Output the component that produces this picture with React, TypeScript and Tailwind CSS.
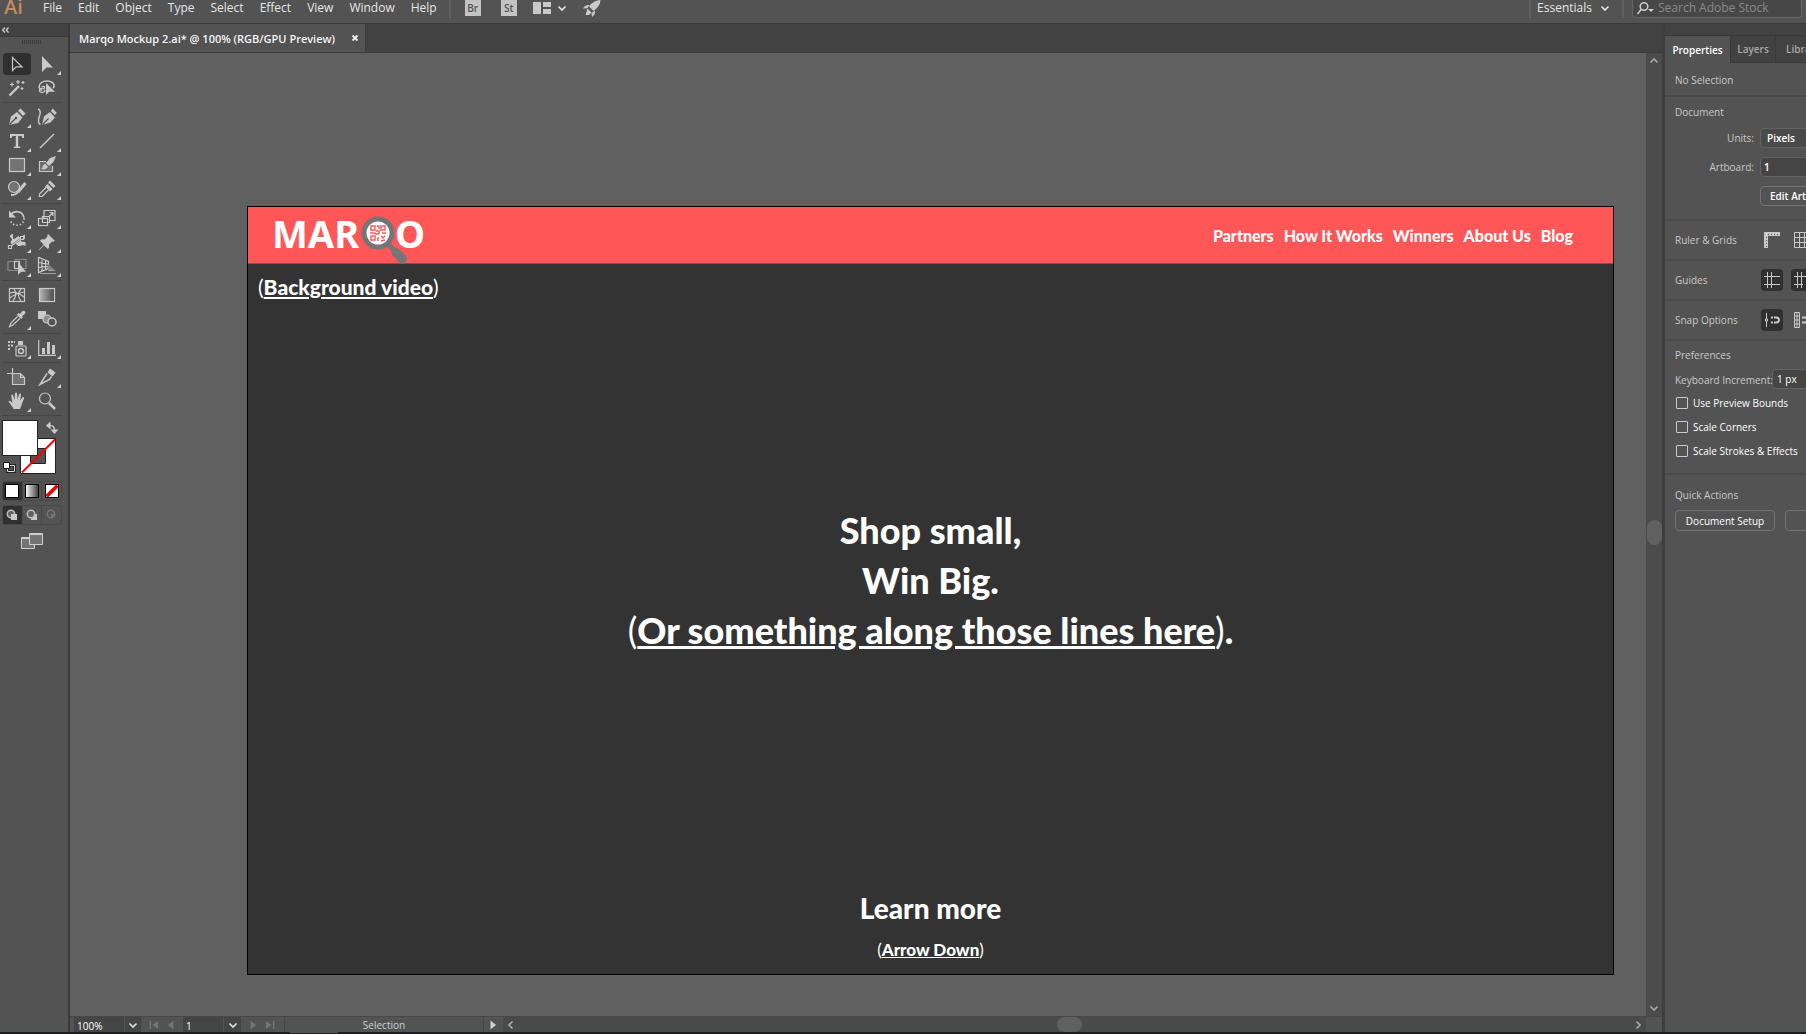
import type { ReactNode } from 'react';

const UI = "font-['Open_Sans','Noto_Sans',sans-serif]";
const DISPLAY = "font-['Lato','Liberation_Sans',sans-serif]";

function Icon({ children, size = 20 }: { children: ReactNode; size?: number }) {
  return (
    <svg width={size} height={size} viewBox="0 0 20 20" fill="none" stroke="#c9c9c9" strokeWidth="1.2" aria-hidden="true">
      {children}
    </svg>
  );
}

const F = '#c9c9c9';

type Tool = { name: string; art: ReactNode; more?: boolean; active?: boolean };

const toolGroups: Tool[][] = [
  [
    { name: 'Selection', active: true, art: <path d="M5.500 3.500v13l3.700-3.700h5.800z" /> },
    { name: 'Direct selection', more: true, art: <path d="M5 2v16l4.500-4.500H16z" fill={F} stroke="none" /> },
    {
      name: 'Magic wand',
      art: (
        <>
          <path d="M2.500 17.500L12 8" strokeWidth="2.400" />
          <path d="M5 4.500v4M3 6.500h4M11 2v4M9 4h4M16 3v3M14.500 4.500h3M15 9v3M13.500 10.500h3" />
        </>
      ),
    },
    {
      name: 'Lasso',
      art: (
        <>
          <path d="M5 12.500C1.500 11 1 7 4.500 4.500s10-2 12 1c1 1.800.5 3.500-.5 4.500" strokeWidth="1.500" />
          <path d="M8 12c0 2.500-5 3.500-5.500 1s4-4 5-1.500M4.500 8.500h3v2" />
          <path d="M9 5v12l3.200-3.200H18z" fill={F} stroke="none" />
        </>
      ),
    },
  ],
  [
    {
      name: 'Pen',
      more: true,
      art: (
        <>
          <path d="M2 18L4 9.500 10 5l5.500 5.500L11 16z" fill={F} stroke="none" />
          <path d="M11 3.800L13.500 1.500l5 5-2.300 2.500z" fill={F} stroke="none" />
          <path d="M2.500 17.500L8.500 11.500" stroke="#535353" />
          <circle cx="9" cy="11" r="1.200" fill="#535353" stroke="none" />
        </>
      ),
    },
    {
      name: 'Curvature',
      art: (
        <>
          <path d="M5 18L7 9.500l6-4.500 5 5.500-4.500 5z" fill={F} stroke="none" />
          <path d="M13.800 4l2-2.500 4 4.500L18 8z" fill={F} stroke="none" />
          <path d="M5.500 17.500l6-6" stroke="#535353" />
          <path d="M1 2c3 1 2.500 4 1.500 7s-2.500 7 1 8.500" strokeWidth="1.400" />
        </>
      ),
    },
    {
      name: 'Type',
      more: true,
      art: <path d="M3 3h14v4h-1.500L14.500 5H11.200v10.500h2v1.500H6.800v-1.500h2V5H5.500L4.500 7H3z" fill={F} stroke="none" />,
    },
    { name: 'Line segment', more: true, art: <path d="M3 17L17 3" strokeWidth="1.500" /> },
    { name: 'Rectangle', more: true, art: <rect x="2.500" y="3.500" width="15" height="13" fill="#737373" /> },
    {
      name: 'Paintbrush',
      more: true,
      art: (
        <>
          <path d="M9 6.500H2.500v10h13V11" fill="#6c6c6c" />
          <path d="M19 1l-6 2-4 5 3 3 4.500-4z" fill={F} stroke="none" />
          <path d="M8.200 8.800l2.700 2.700c-1 3-4 3.500-7 2.500 2-.5 1.500-4 4.300-5.200z" fill={F} stroke="none" />
        </>
      ),
    },
    {
      name: 'Shaper',
      more: true,
      art: (
        <>
          <circle cx="7" cy="8" r="5.500" fill="#737373" />
          <path d="M18.500 4L11 13" strokeWidth="3" />
          <path d="M11 13c-2 3-4 3-7 3" strokeWidth="1.800" />
        </>
      ),
    },
    {
      name: 'Slice',
      more: true,
      art: (
        <>
          <path d="M13 1.500l5.500 5.500-2 2L11 3.500z" fill={F} stroke="none" />
          <path d="M10.500 5l5 5-2.500 2.500-5-5z" fill={F} stroke="none" />
          <path d="M9 8.500L2.500 15v2.500H5l6.500-6.500" />
        </>
      ),
    },
  ],
  [
    {
      name: 'Rotate',
      more: true,
      art: (
        <>
          <path d="M4 7C6.500 2.500 15 2 17 9.500" strokeWidth="1.700" />
          <path d="M2 2.500v7h7z" fill={F} stroke="none" />
          <path d="M17 10c.5 8-10 10-13.500 3" strokeDasharray="1.500 2" strokeWidth="1.600" />
        </>
      ),
    },
    {
      name: 'Scale',
      more: true,
      art: (
        <>
          <path d="M7 10V2.500h11v10h-6" />
          <rect x="1.500" y="10.500" width="9" height="7" />
          <path d="M5.500 8.500h7v6h-7z" />
          <path d="M12 8.500l4-4M12.500 4.500H16V8" />
        </>
      ),
    },
    {
      name: 'Width',
      more: true,
      art: (
        <>
          <path d="M3 3.500l3-2v5c2 2 4-3 6-2s1 3 4-1l2-1v3c0 3-3 2-4 2.500 0 3 3 1 4.500 2.500v4c-3-3-6 1-8-1s-2-2-4-1-4-2-2-4S2 5.500 3 3.500z" fill={F} stroke="none" />
          <path d="M3 15l12-9" stroke="#535353" strokeWidth="2" />
          <path d="M3 15l12-9" />
          <path d="M1.500 13.500h3v3h-3zM13.500 4.500h3v3h-3z" fill="#535353" />
        </>
      ),
    },
    { name: 'Puppet warp', more: true, art: <path d="M11 2l7 7-2 .8-1-.3-3 3 .2 3-1.500 1.500-3.700-3.700L2.500 18 2 17.500l4.700-5L3 8.800l1.500-1.500 3 .2 3-3-.3-1z" fill={F} stroke="none" /> },
    {
      name: 'Shape builder',
      more: true,
      art: (
        <>
          <path d="M1 5.500h11v9H1z" stroke="#8b8b8b" />
          <path d="M7.500 3.500H19v9h-6" stroke="#8b8b8b" />
          <rect x="7.500" y="5.500" width="5" height="7" />
          <path d="M11 6v13l3.200-3.200H19z" fill={F} stroke="none" />
        </>
      ),
    },
    {
      name: 'Perspective grid',
      more: true,
      art: (
        <>
          <path d="M1.500 1.500v15l10-4V5.500zM1.500 6.500l10 1.500M1.500 11.500l10-1.200M5 2.500v12.700M8.500 4v9.800" />
          <path d="M11 8l8 7H11z" fill="#858585" stroke="none" />
          <path d="M3 17.500h16M12 14.500h5" stroke="#a0a0a0" />
        </>
      ),
    },
  ],
  [
    {
      name: 'Mesh',
      art: (
        <>
          <rect x="2.500" y="3.500" width="15" height="13" />
          <path d="M3 8c5-2 9 0 14 4M3 13c4-4 9-5 14-6M7 4c3 4 2 8-1 12M14 4c-4 4-3 8 0 12" />
        </>
      ),
    },
    {
      name: 'Gradient',
      art: (
        <>
          <defs>
            <linearGradient id="toolGradient">
              <stop offset="0" stopColor="#b5b5b5" />
              <stop offset="1" stopColor="#484848" />
            </linearGradient>
          </defs>
          <rect x="2.500" y="3.500" width="15" height="13" fill="url(#toolGradient)" />
        </>
      ),
    },
    {
      name: 'Eyedropper',
      more: true,
      art: (
        <>
          <path d="M13 5l2-2.500c2-2 4.500.5 2.700 2.500L15 7.500l.8 1-1.800 1.500L9.800 6 11.500 4z" fill={F} stroke="none" />
          <path d="M10.500 7.500L4 14l-1.500 3.500L6 16l6.700-6.500" />
        </>
      ),
    },
    {
      name: 'Blend',
      art: (
        <>
          <path d="M1 2h8v8H1z" fill={F} stroke="none" />
          <circle cx="10" cy="10" r="4" fill="#8c8c8c" />
          <circle cx="15" cy="13" r="4" fill="#535353" strokeWidth="1.500" />
        </>
      ),
    },
  ],
  [
    {
      name: 'Symbol sprayer',
      more: true,
      art: (
        <>
          <path d="M1 4h7M1 7.500h5M1 11h3" strokeDasharray="2 1" strokeWidth="2" />
          <rect x="9" y="8" width="10" height="10" rx="1" />
          <path d="M11 3h5v4h-5z" fill={F} stroke="none" />
          <circle cx="14" cy="13" r="2.500" strokeWidth="1.500" />
        </>
      ),
    },
    {
      name: 'Column graph',
      more: true,
      art: (
        <>
          <path d="M1.700 2v15.300H19" />
          <path d="M5 10h3v6H5zM10 4h3v12h-3zM15 7h3v9h-3z" fill={F} stroke="none" />
        </>
      ),
    },
  ],
  [
    {
      name: 'Artboard',
      art: (
        <>
          <path d="M5.500 6.500h8l4 4v7h-12z" fill="#737373" />
          <path d="M0 6.500h9M5.500 1v7" />
          <path d="M13.500 6.500v4h4" />
        </>
      ),
    },
    {
      name: 'Knife',
      more: true,
      art: (
        <>
          <path d="M13 1.500l5.500 4-3 4-5-4z" fill={F} stroke="none" />
          <path d="M10 6.500L3 17.500l9.500-5 2-3" strokeWidth="1.500" />
        </>
      ),
    },
    {
      name: 'Hand',
      more: true,
      art: (
        <path
          d="M6.500 18C5 15 3 12.500 1.500 10.500 1.800 9 3.500 9.500 5.500 12L4.200 4.500c.3-1.500 1.800-1.200 2 0L7.500 9 8 2.500c.3-1.400 1.900-1.400 2.100 0l.4 6 1.600-5.200c.5-1.300 2-.9 1.900.4L13 9.500l2.500-3.300c1-.8 2 .1 1.500 1.200L15 12.500c-.5 2.500-1.500 4-2 5.500z"
          fill={F}
          stroke="none"
        />
      ),
    },
    {
      name: 'Zoom',
      art: (
        <>
          <circle cx="8" cy="7.500" r="5.500" />
          <path d="M12 12l6 6" strokeWidth="2.500" />
        </>
      ),
    },
  ],
];

function ToolButton({ tool }: { tool: Tool }) {
  return (
    <button
      type="button"
      aria-label={tool.name}
      className={`relative flex h-[22px] w-7 items-center justify-center rounded-sm ${tool.active ? 'bg-[#2f2f2f]' : ''}`}
    >
      <Icon>{tool.art}</Icon>
      {tool.more && (
        <svg className="absolute right-0 bottom-0" width="4" height="4" aria-hidden="true">
          <path d="M4 0v4H0z" fill="#d0d0d0" />
        </svg>
      )}
    </button>
  );
}

function Chevron({ dir = 'down', color = '#e0e0e0' }: { dir?: 'down' | 'up' | 'left' | 'right'; color?: string }) {
  const paths = { down: 'M1.500 3.500L5 7l3.500-3.500', up: 'M1.500 6.500L5 3l3.500 3.500', left: 'M6.500 1.500L3 5l3.500 3.500', right: 'M3.500 1.500L7 5 3.500 8.500' };
  return (
    <svg width="10" height="10" viewBox="0 0 10 10" fill="none" stroke={color} strokeWidth="1.700" aria-hidden="true">
      <path d={paths[dir]} />
    </svg>
  );
}

function FillStroke() {
  return (
    <svg width="60" height="56" viewBox="0 0 60 56" role="img" aria-label="Fill and stroke">
      <path d="M18.500 19.500h35v35h-35zM28.500 29.500v15h15v-15z" fill="#fff" stroke="#222" fillRule="evenodd" />
      <path d="M20 53.500L53 20.500" stroke="#f00" strokeWidth="2" />
      <rect x="0.500" y="1.500" width="35" height="35" fill="#fff" stroke="#222" />
      <path d="M48 6.500c4 0 4.500 2 4.500 5.500" fill="none" stroke={F} strokeWidth="1.600" />
      <path d="M48.500 2.500v8l-4.500-4zM48.500 10.500h8L52.500 15z" fill={F} />
      <path d="M5.500 46.500h7v6h-7z" fill="none" stroke="#222" strokeWidth="3" />
      <path d="M5.500 46.500h7v6h-7z" fill="none" stroke="#ddd" />
      <path d="M1.500 43.500h6v6h-6z" fill="#fff" stroke="#111" />
    </svg>
  );
}

function Swatch({ kind }: { kind: 'solid' | 'gradient' | 'none' }) {
  return (
    <svg width="14" height="14" viewBox="0 0 14 14" aria-hidden="true">
      <defs>
        <linearGradient id="swatchGradient">
          <stop offset="0" stopColor="#fff" />
          <stop offset="1" stopColor="#3a3a3a" />
        </linearGradient>
      </defs>
      <rect x="0.500" y="0.500" width="13" height="13" fill={kind === 'gradient' ? 'url(#swatchGradient)' : '#fff'} stroke="#000" />
      {kind === 'none' && <path d="M1.500 12.500l11-11" stroke="#f00000" strokeWidth="3.500" />}
    </svg>
  );
}

function DrawMode({ kind }: { kind: 'normal' | 'behind' | 'inside' }) {
  const color = kind === 'inside' ? '#757575' : '#bdbdbd';
  return (
    <svg width="12" height="12" viewBox="0 0 12 12" aria-hidden="true">
      {kind === 'behind' && <path d="M5 5h6v6H5z" fill="#c9c9c9" />}
      <circle cx="5" cy="5" r="3.700" fill={kind === 'inside' ? 'none' : '#606060'} stroke={color} strokeWidth="1.500" />
      {kind === 'normal' && <path d="M5 5h6v6H5z" fill="#c9c9c9" />}
      {kind === 'inside' && <path d="M5 5h3v3H5z" fill={color} />}
    </svg>
  );
}

function Toolbar() {
  return (
    <aside className="flex w-[70px] shrink-0 flex-col border-r-2 border-[#3a3a3a] bg-[#535353]">
      <div className="flex h-3 items-center bg-[#424242] px-0.5">
        <svg width="7" height="6" viewBox="0 0 7 6" fill="none" stroke="#ccc" strokeWidth="1.300" aria-hidden="true">
          <path d="M3 0.500L0.700 3 3 5.500M6.500 0.500L4.200 3l2.300 2.500" />
        </svg>
      </div>
      <div className="flex h-4 items-start justify-center border-t border-[#3a3a3a] pt-[3px] pr-1">
        <svg width="20" height="4" aria-hidden="true">
          <path d="M0.500 0v4M2.500 0v4M4.500 0v4M6.500 0v4M8.500 0v4M10.500 0v4M12.500 0v4M14.500 0v4M16.500 0v4M18.500 0v4" stroke="#3c3c3c" />
        </svg>
      </div>
      <div className="w-[62px] pl-0.5">
        {toolGroups.map((group, i) => (
          <div key={i} className="mb-0.5 border-b border-[#474747] pb-0.5">
            <div className="grid grid-cols-2 pl-px">
              {group.map((tool) => (
                <div key={tool.name} className="flex h-6 items-center">
                  <ToolButton tool={tool} />
                </div>
              ))}
            </div>
          </div>
        ))}
      </div>
      <div className="flex flex-col pt-px pl-0.5">
        <FillStroke />
        <div className="mt-1.5 flex h-5 w-[60px] rounded-sm border border-[#484848]">
          {(['solid', 'gradient', 'none'] as const).map((k) => (
            <button key={k} type="button" aria-label={`Paint: ${k}`} className="flex flex-1 items-center justify-center border-r border-[#484848] first:bg-[#303030] last:border-r-0">
              <Swatch kind={k} />
            </button>
          ))}
        </div>
        <div className="mt-1 flex h-5 w-[60px] rounded-sm border border-[#484848]">
          {(['normal', 'behind', 'inside'] as const).map((k) => (
            <button key={k} type="button" aria-label={`Draw ${k}`} className="flex flex-1 items-center justify-center border-r border-[#484848] first:bg-[#303030] last:border-r-0">
              <DrawMode kind={k} />
            </button>
          ))}
        </div>
        <button type="button" aria-label="Change screen mode" className="mt-2 ml-[19px] w-6">
          <svg width="22" height="17" viewBox="0 0 22 17" stroke="#d0d0d0" fill="#737373" aria-hidden="true">
            <path d="M0.500 4.500h13v11H0.500z" />
            <path d="M8.500 0.500h13v11h-13z" />
            <path d="M0 5.500h8M8 1.500h14" />
          </svg>
        </button>
      </div>
    </aside>
  );
}

const menus = ['File', 'Edit', 'Object', 'Type', 'Select', 'Effect', 'View', 'Window', 'Help'];

function MenuBar() {
  return (
    <header className="flex h-6 shrink-0 items-start overflow-hidden border-b border-[#3a3a3a] bg-[#535353] text-xs leading-4 text-[#e6e6e6]">
      <div className="w-[43px] shrink-0 pl-1 text-xl leading-[14px] font-semibold text-[#c68963]">Ai</div>
      <nav className="flex gap-4">
        {menus.map((m) => (
          <button key={m} type="button">{m}</button>
        ))}
      </nav>
      <div className="ml-3 h-[18px] w-0.5 bg-[#606060]" />
      <div className="ml-3.5 flex h-4 items-center gap-5">
        <button type="button" className="h-4 w-4 bg-[#c4c4c4] text-[10px] leading-4 font-semibold text-[#535353]">Br</button>
        <button type="button" className="h-4 w-4 bg-[#c4c4c4] text-[10px] leading-4 font-semibold text-[#535353]">St</button>
        <button type="button" aria-label="Arrange documents" className="-ml-1 flex items-center gap-1.5">
          <svg width="18" height="14" fill="#c9c9c9" aria-hidden="true">
            <path d="M0 1h8v12H0zM10 1h8v5h-8zM10 8h8v5h-8z" />
          </svg>
          <Chevron />
        </button>
        <button type="button" aria-label="GPU performance" className="-ml-1">
          <svg width="18" height="17" viewBox="0 0 18 17" fill="#c9c9c9" aria-hidden="true">
            <path d="M17.500 0C12 .5 8.500 3 6 6.500L10.500 11C14.500 8 17 5 17.500 0zM6.500 5C3.500 4.500 1.500 6 0 8.500l4.500-.3zM12 10.500c.5 3-.5 4.500-3 6.500l-.5-4zM4.500 8.500l4 4L6 15H2.500z" />
          </svg>
        </button>
      </div>
      <div className="ml-auto flex shrink-0 items-start">
        <div className="h-[18px] w-0.5 bg-[#606060]" />
        <button type="button" className="mr-2.5 ml-1 flex items-center gap-2 px-0.5">
          Essentials
          <Chevron />
        </button>
        <div className="h-[18px] w-0.5 bg-[#606060]" />
        <label className="mr-1 ml-2 flex h-[18px] w-[170px] items-start rounded-b border border-t-0 border-[#666] bg-[#474747] pl-1">
          <span className="sr-only">Search Adobe Stock</span>
          <svg className="mt-0.5 shrink-0" width="17" height="13" viewBox="0 0 17 13" fill="none" stroke="#d0d0d0" strokeWidth="1.500" aria-hidden="true">
            <circle cx="7" cy="4.500" r="3.800" />
            <path d="M4.200 7.500L0.500 12" />
            <path d="M11 7h6l-3 3z" fill="#d0d0d0" stroke="none" />
          </svg>
          <input type="search" placeholder="Search Adobe Stock" className="ml-1 h-4 w-full min-w-0 bg-transparent outline-none placeholder:text-[#8a8a8a]" />
        </label>
      </div>
    </header>
  );
}

function Logo() {
  return (
    <div className="flex items-center font-['Noto_Sans',sans-serif] text-[38px] leading-none font-bold text-white">
      <span className="pb-1">MAR</span>
      <svg className="mt-2 w-9 overflow-visible" height="48" viewBox="0 0 36 48" role="img" aria-label="Q">
        <path d="M29 29l8 8" stroke="#757577" strokeWidth="5" />
        <path d="M37 37.500l6.500 6.500" stroke="#757577" strokeWidth="9" strokeLinecap="round" />
        <circle cx="19" cy="18" r="14" fill="#fff" stroke="#757577" strokeWidth="5" />
        <g fill="none" stroke="#ff5757" strokeWidth="1.400">
          <path d="M12 11h4v4h-4zM22 11h4v4h-4zM12 21h4v4h-4z" />
          <path d="M18 11h2v3M17 16h4M11 18h4l2 1h3M23 18h4M19 22v4M22 21l2 2 2-2M22 26l4-1M20 19v-2" />
        </g>
      </svg>
      <span className="pb-1">O</span>
    </div>
  );
}

function Artboard() {
  return (
    <section className={`flex flex-1 flex-col border border-black bg-[#333333] font-black text-white ${DISPLAY}`}>
      <div className="flex h-[57px] items-center justify-between border-b border-[#9e4545] bg-[#ff5757] pr-10 pl-6">
        <Logo />
        <nav className="flex gap-2.5 pt-0.5 text-base">
          {['Partners', 'How It Works', 'Winners', 'About Us', 'Blog'].map((l) => (
            <a key={l} href="#">{l}</a>
          ))}
        </nav>
      </div>
      <p className="mt-[7px] ml-2.5 text-[21px] leading-8">
        <span className="font-normal">(</span><span className="underline">Background video</span><span className="font-normal">)</span>
      </p>
      <h1 className="mt-auto pb-[34px] text-center text-4xl leading-[50px]">
        Shop small,<br />
        Win Big.<br />
        <span className="font-normal">(</span><span className="underline">Or something along those lines here</span><span className="font-normal">)</span>.
      </h1>
      <div className="mt-auto pb-2.5 text-center">
        <p className="text-[28px] leading-9">Learn more</p>
        <p className="mt-2.5 text-[17px] leading-7">
          <span className="font-normal">(</span><a href="#" className="underline">Arrow Down</a><span className="font-normal">)</span>
        </p>
      </div>
    </section>
  );
}

function Play({ flip = false, bar = false, color = '#747474' }: { flip?: boolean; bar?: boolean; color?: string }) {
  return (
    <svg width="9" height="10" viewBox="0 0 9 10" fill={color} className={flip ? 'rotate-180' : ''} aria-hidden="true">
      <path d={bar ? 'M0 1l5.500 4L0 9zM7 1h1.500v8H7z' : 'M1.500 0.500L7 5 1.500 9.500z'} />
    </svg>
  );
}

function StatusBar() {
  const field = 'h-[15px] bg-[#454545] pt-0.5 pl-[3px] text-[10px] leading-[13px] text-white outline-none min-w-0';
  return (
    <footer className="flex h-4 shrink-0 items-center border-t border-[#484848] bg-[#535353]">
      <input aria-label="Zoom level" defaultValue="100%" className={`ml-1 w-[50px] ${field}`} />
      <button type="button" aria-label="Zoom presets" className="flex h-[15px] w-[17px] items-center justify-center border-l border-[#535353] bg-[#454545]"><Chevron /></button>
      <button type="button" aria-label="First artboard" className="ml-2"><Play flip bar /></button>
      <button type="button" aria-label="Previous artboard" className="ml-2"><Play flip /></button>
      <input aria-label="Artboard number" defaultValue="1" className={`ml-2 w-10 ${field}`} />
      <button type="button" aria-label="Artboard list" className="ml-px flex h-[15px] w-[17px] items-center justify-center bg-[#454545]"><Chevron /></button>
      <button type="button" aria-label="Next artboard" className="ml-2"><Play /></button>
      <button type="button" aria-label="Last artboard" className="ml-2"><Play bar /></button>
      <div className="ml-[9px] h-[15px] w-[200px] border-x border-[#484848] pt-0.5 text-center text-[10px] leading-[13px] text-[#cfcfcf]">Selection</div>
      <button type="button" aria-label="Status menu" className="mx-[5px]"><Play color="#d0d0d0" /></button>
      <div className="flex h-[15px] flex-1 items-center bg-[#4a4a4a] px-[3px]">
        <Chevron dir="left" color="#a8a8a8" />
        <div className="flex flex-1 justify-center pr-2.5"><div className="h-[15px] w-[25px] rounded-full bg-[#606060]" /></div>
        <Chevron dir="right" color="#a8a8a8" />
      </div>
      <div className="w-4" />
    </footer>
  );
}

function Workspace() {
  return (
    <main className="flex min-w-0 flex-1 flex-col bg-[#606060]">
      <div className="flex h-[29px] shrink-0 border-b border-[#3a3a3a] bg-[#424242]">
        <div className="flex items-center border-r border-[#3a3a3a] bg-[#535353] pr-1.5 pl-[9px]">
          <span className="pt-0.5 text-[11px] font-semibold whitespace-nowrap text-[#f4f4f4]">Marqo Mockup 2.ai* @ 100% (RGB/GPU Preview)</span>
          <button type="button" aria-label="Close document" className="ml-4">
            <svg width="8" height="8" viewBox="0 0 8 8" stroke="#ededed" strokeWidth="1.800" aria-hidden="true"><path d="M1.500 1.500l5 5M6.500 1.500l-5 5" /></svg>
          </button>
        </div>
      </div>
      <div className="flex min-h-0 flex-1">
        <div className="flex min-w-0 flex-1 pt-[153px] pr-8 pb-[41px] pl-[177px]">
          <Artboard />
        </div>
        <div className="flex w-4 shrink-0 flex-col items-center justify-between bg-[#4b4b4b] py-[3px]">
          <Chevron dir="up" color="#a8a8a8" />
          <div className="mb-1 h-[25px] w-[15px] rounded-full bg-[#606060]" />
          <Chevron dir="down" color="#a8a8a8" />
        </div>
      </div>
      <StatusBar />
    </main>
  );
}

function PanelRow({ label, children }: { label: string; children: ReactNode }) {
  return (
    <div className="flex h-10 items-center border-b-2 border-[#4a4a4a] pl-2.5">
      <h2 className="w-[86px]">{label}</h2>
      <div className="flex gap-2">{children}</div>
    </div>
  );
}

function PanelIcon({ label, on, children }: { label: string; on?: boolean; children: ReactNode }) {
  return (
    <button type="button" aria-label={label} className={`flex h-[22px] w-[22px] shrink-0 items-center justify-center rounded-sm ${on ? 'bg-[#303030]' : ''}`}>
      <svg width="16" height="16" viewBox="0 0 16 16" fill="none" stroke="#c9c9c9" aria-hidden="true">{children}</svg>
    </button>
  );
}

function PropertiesPanel() {
  return (
    <aside className="w-36 shrink-0 overflow-hidden border-l-3 border-[#3e3e3e] bg-[#535353] text-[10px] leading-4 text-[#c8c8c8]">
      <div className="w-[240px]">
        <div className="h-3 border-b border-[#3a3a3a] bg-[#424242]" />
        <div className="flex h-[27px] bg-[#424242] font-semibold text-[#a8a8a8]">
          <button type="button" className="w-[65px] bg-[#535353] text-white">Properties</button>
          <button type="button" className="w-[46px] border-r border-b border-l border-[#3a3a3a]">Layers</button>
          <button type="button" className="flex-1 border-b border-[#3a3a3a] pl-2.5 text-left">Libraries</button>
        </div>
        <p className="h-[34px] border-b-2 border-[#4a4a4a] pt-[9px] pl-2.5">No Selection</p>
        <div className="h-[124px] border-b-2 border-[#4a4a4a] pt-[7px] pl-2.5">
          <h2>Document</h2>
          <div className="mt-2 grid grid-cols-[79px_110px] items-center gap-x-1.5 gap-y-[9px]">
            <label htmlFor="units" className="text-right">Units:</label>
            <select id="units" className="h-5 appearance-none rounded-sm border border-[#636363] bg-[#4a4a4a] px-1.5 font-semibold text-white">
              <option>Pixels</option>
            </select>
            <label htmlFor="artboard" className="text-right">Artboard:</label>
            <select id="artboard" className="h-5 appearance-none rounded-sm border border-[#636363] bg-[#454545] px-[3px] font-semibold text-white">
              <option>1</option>
            </select>
            <button type="button" className="col-start-2 h-5 rounded-sm border border-[#737373] pl-[9px] text-left font-semibold text-white">Edit Artboards</button>
          </div>
        </div>
        <PanelRow label="Ruler &amp; Grids">
          <PanelIcon label="Show rulers">
            <path d="M0 0h16v4H4v12H0z" fill="#c9c9c9" stroke="none" />
            <path d="M4 2.500h12M2.500 5v11" stroke="#535353" strokeDasharray="1 2" />
          </PanelIcon>
          <PanelIcon label="Show grid"><path d="M.5.500h15v15H.5zM.5 5.500h15M.5 10.500h15M5.500.500v15M10.500.500v15" /></PanelIcon>
        </PanelRow>
        <PanelRow label="Guides">
          <PanelIcon label="Show guides" on><path d="M0 4.500h16M0 12.500h16M3.500 0v16M7.500 0v16" /></PanelIcon>
          <PanelIcon label="Lock guides" on>
            <path d="M0 4.500h16M0 12.500h9M3.500 0v16M7.500 0v16" />
            <path d="M13 10h3v6h-3z" fill="#c9c9c9" />
          </PanelIcon>
        </PanelRow>
        <PanelRow label="Snap Options">
          <PanelIcon label="Snap to point" on>
            <path d="M2.500 1v6M2.500 9v6M1.500 7h2v2h-2z" />
            <path d="M7 5.500h5.500a2.500 2.500 0 010 5H7" strokeWidth="2" />
            <path d="M9.500 4v8" stroke="#303030" />
          </PanelIcon>
          <PanelIcon label="Snap to pixel">
            <path d="M.5.500h5v15h-5zM3 0v16M0 4h6M0 8h6M0 12h6" />
            <path d="M8 5.500h5a2.500 2.500 0 010 5H8" strokeWidth="2" />
          </PanelIcon>
        </PanelRow>
        <div className="h-[134px] border-b-2 border-[#4a4a4a] pt-1.5 pl-2.5">
          <h2>Preferences</h2>
          <div className="mt-1.5 flex h-5 items-center">
            <label htmlFor="increment" className="w-[97px] pt-0.5 whitespace-nowrap">Keyboard Increment:</label>
            <input id="increment" defaultValue="1 px" className="h-5 w-16 rounded-sm border border-[#636363] bg-[#454545] px-1 font-medium text-white" />
          </div>
          <div className="mt-0.5 flex flex-col">
            {['Use Preview Bounds', 'Scale Corners', 'Scale Strokes & Effects'].map((l) => (
              <label key={l} className="flex h-6 items-center gap-[5px] pl-px font-medium whitespace-nowrap text-white">
                <input type="checkbox" className="h-3 w-3 appearance-none rounded-[1px] border border-[#c9c9c9]" />
                {l}
              </label>
            ))}
          </div>
        </div>
        <div className="pt-3 pl-2.5">
          <h2>Quick Actions</h2>
          <div className="mt-[7px] flex gap-2.5">
            <button type="button" className="h-[21px] w-[100px] rounded-sm border border-[#737373] font-medium text-white">Document Setup</button>
            <button type="button" aria-label="Preferences" className="h-[21px] w-[100px] rounded-sm border border-[#737373]" />
          </div>
        </div>
      </div>
    </aside>
  );
}

export default function App() {
  return (
    <div className={`flex h-screen flex-col overflow-hidden bg-[#535353] ${UI}`}>
      <MenuBar />
      <div className="flex min-h-0 flex-1">
        <Toolbar />
        <Workspace />
        <PropertiesPanel />
      </div>
      <div className="h-0.5 shrink-0 bg-[#1b1d21] pl-[290px]">
        <div className="h-px w-12 bg-[#555]" />
      </div>
    </div>
  );
}
